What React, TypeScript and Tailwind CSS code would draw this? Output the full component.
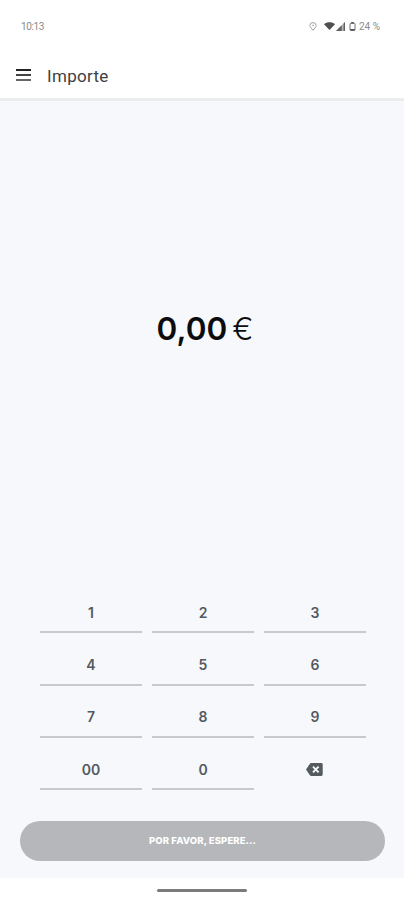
const keys = ["1", "2", "3", "4", "5", "6", "7", "8", "9", "00", "0"];

const StatusBar = () => {
  return (
    <div className="flex h-[52px] items-center justify-between pl-[21px] pr-[24px] text-[#8a8a8a]">
      <span className="mt-px font-['Roboto',sans-serif] text-[10px] leading-none tracking-[-0.4px]">
        10:13
      </span>
      <div className="flex items-center">
        <svg width="8" height="9" viewBox="0 0 8 9" fill="none" className="mr-[7px]">
          <path
            d="M4 8.3C2.6 6.4.9 5.2.9 3.4a3.1 2.8 0 0 1 6.2 0C7.1 5.2 5.4 6.4 4 8.3Z"
            stroke="#a0a0a0"
          />
          <circle cx="4" cy="3.4" r="0.9" fill="#b4b4b4" />
        </svg>
        <svg width="11" height="8" viewBox="0 0 11 8" className="mr-px">
          <path d="M0 2.2C3.1-.4 7.9-.4 11 2.2L5.5 8Z" fill="#505050" />
        </svg>
        <svg width="9" height="9" viewBox="0 0 9 9" className="mr-[4px]">
          <path d="M0 9 9 0v9Z" fill="#b5b5b5" />
          <path d="M0 9 5.7 3.3V9ZM7.6 1.4 9 0v9H7.6Z" fill="#606060" />
        </svg>
        <svg width="7" height="9" viewBox="0 0 7 9" fill="none" className="mr-[3px]">
          <rect x="1" y="1.3" width="5" height="7.2" rx="1" stroke="#707070" />
          <path d="M2.2.8h2.6M1.2 7.8h4.6" stroke="#555555" strokeWidth="1.4" />
        </svg>
        <span className="mt-px font-['Roboto',sans-serif] text-[10px] leading-none">
          24 %
        </span>
      </div>
    </div>
  );
};

const BackspaceIcon = () => {
  return (
    <svg width="17" height="13" viewBox="0 0 17 13">
      <path
        d="M5.2 0h10.1A1.4 1.4 0 0 1 16.7 1.4v10.2a1.4 1.4 0 0 1-1.4 1.4H5.2a1.6 1.6 0 0 1-1.3-.7L0 6.5 3.9.7A1.6 1.6 0 0 1 5.2 0Z"
        fill="#545a5e"
      />
      <path d="m7 3.6 5.6 5.8m0-5.8L7 9.4" stroke="#f6f8fc" strokeWidth="1.9" />
    </svg>
  );
};

const App = () => {
  return (
    <div className="flex h-[900px] w-[404px] flex-col bg-white font-['Inter',sans-serif]">
      <StatusBar />

      <header className="flex h-[49px] items-center border-b-[3px] border-[#ebecee] pl-[16px]">
        <button aria-label="Menu" className="flex w-[15px] flex-col gap-[3px]">
          <span className="h-[2px] w-full bg-[#222222]" />
          <span className="h-[2px] w-full bg-[#444444]" />
          <span className="h-[2px] w-full bg-[#666666]" />
        </button>
        <h1 className="ml-[16px] mt-[2px] font-['Roboto',sans-serif] text-[17px] leading-none tracking-[0.3px] text-[#404040]">
          Importe
        </h1>
      </header>

      <main className="flex h-[777px] flex-col bg-[#f6f8fc]">
        <div className="flex h-[456px] items-center justify-center pl-[6px] text-[31.5px] leading-none text-[#0c0c0e]">
          <span className="font-semibold">0,00</span>
          <span className="ml-[5px] font-light">€</span>
        </div>

        <div className="ml-[40px] mr-[38px] mt-[24px] grid grid-cols-3 gap-x-[10px] text-[14px] font-semibold text-[#545a5e]">
          {keys.map((key) => (
            <button
              key={key}
              className="flex h-[52.3px] items-center justify-center border-b-2 border-[#c8cace] pt-[12px]"
            >
              {key}
            </button>
          ))}
          <button
            aria-label="Borrar"
            className="flex h-[52.3px] items-center justify-center pt-[10px] pr-[2px]"
          >
            <BackspaceIcon />
          </button>
        </div>

        <button className="ml-[20px] mt-[30.8px] h-[40px] w-[365px] rounded-full bg-[#b5b7ba] text-[9.5px] font-extrabold tracking-[0.1px] text-white">
          POR FAVOR, ESPERE...
        </button>
      </main>

      <div className="flex h-[22px] justify-center pt-[11px]">
        <div className="h-[3px] w-[90px] rounded-full bg-[#7b7b7b]" />
      </div>
    </div>
  );
};

export default App;
